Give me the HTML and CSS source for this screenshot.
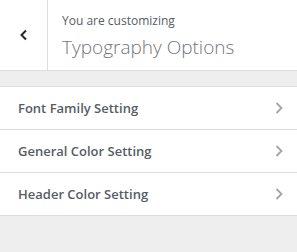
FILE: index.html
```html
<html lang="en">
<head>
    <meta charset="UTF-8">
    <title>Typography Options</title>
    <link rel="stylesheet" href="styles.css">
</head>
<body>
<div class="panel-header">
    <a class="back" href="javascript:;">
        <svg width="10" height="12" viewBox="0 0 10 12"><path d="M7 1.5 L2.5 6 L7 10.5" fill="none" stroke="#23282d" stroke-width="2"/></svg>
    </a>
    <div class="title">
        <span class="sub">You are customizing</span>
        <h3>Typography Options</h3>
    </div>
</div>
<ul class="sections">
    <li><span>Font Family Setting</span><svg class="arrow" width="8" height="12" viewBox="0 0 8 12"><path d="M1.5 1 L6.5 6 L1.5 11" fill="none" stroke="#a0a5aa" stroke-width="1.8"/></svg></li>
    <li><span>General Color Setting</span><svg class="arrow" width="8" height="12" viewBox="0 0 8 12"><path d="M1.5 1 L6.5 6 L1.5 11" fill="none" stroke="#a0a5aa" stroke-width="1.8"/></svg></li>
    <li><span>Header Color Setting</span><svg class="arrow" width="8" height="12" viewBox="0 0 8 12"><path d="M1.5 1 L6.5 6 L1.5 11" fill="none" stroke="#a0a5aa" stroke-width="1.8"/></svg></li>
</ul>
</body>
</html>
```
FILE: styles.css
```css
*{
    padding:0px;
    margin:0px;
}
body{
    font-family:"Open Sans","Noto Sans",sans-serif;
    background:#eee;
    height:252px;
}
.panel-header{
    display:flex;
    height:70px;
    background:#fff;
    border-bottom:1px solid #ddd;
}
.panel-header .back{
    width:47px;
    border-right:1px solid #ddd;
    display:flex;
    align-items:center;
    justify-content:center;
}
.panel-header .title{
    padding:12px 0 0 14px;
}
.panel-header .sub{
    display:block;
    font-size:12px;
    line-height:17px;
    color:#555d66;
}
.panel-header h3{
    font-size:19px;
    font-weight:300;
    line-height:26px;
    margin-top:5px;
    color:#72777c;
}
.sections{
    list-style:none;
    margin-top:15px;
    background:#fff;
    border-top:1px solid #ddd;
}
.sections li{
    height:42px;
    border-bottom:1px solid #ddd;
    display:flex;
    align-items:center;
    justify-content:space-between;
    padding:0 14px 0 18px;
    font-size:13px;
    font-weight:600;
    color:#555d66;
}
```
